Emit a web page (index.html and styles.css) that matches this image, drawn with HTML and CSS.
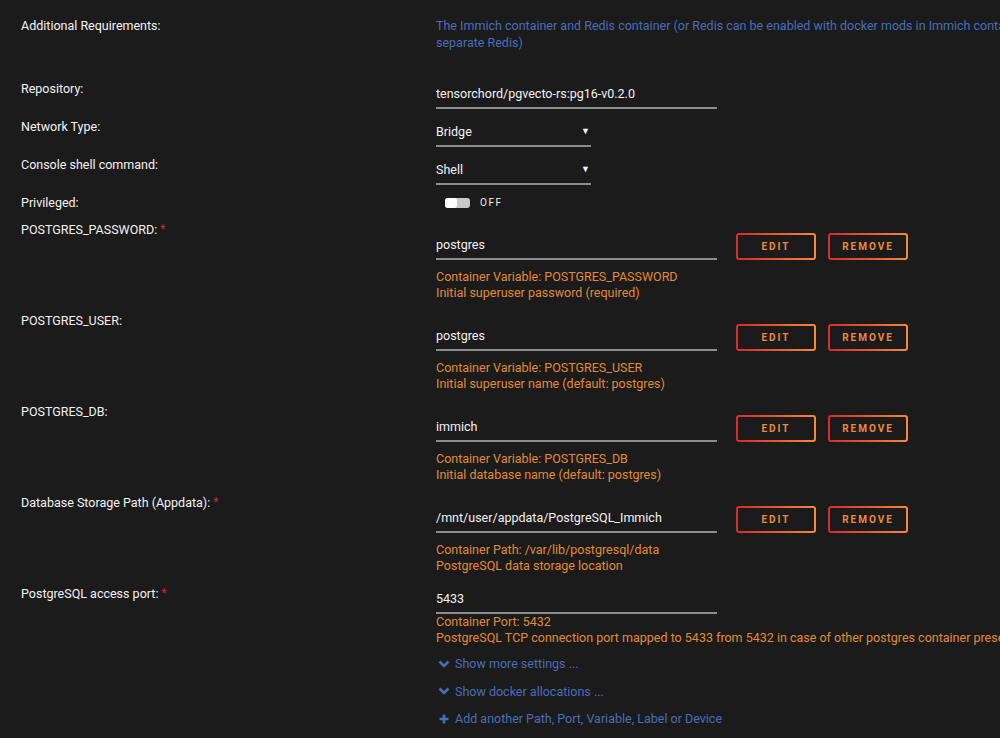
FILE: index.html
```html
<!DOCTYPE html>
<html lang="en">

<head>
    <meta charset="UTF-8">
    <meta name="viewport" content="width=device-width, initial-scale=1.0">
    <title>Immich PostgreSQL - Update Container</title>
    <link rel="stylesheet" href="styles.css">
</head>

<body>

    <form class="settings">

        <div class="row row-info">
            <div class="label">Additional Requirements:</div>
            <div class="info">
                The Immich container and Redis container (or Redis can be enabled with docker mods in Immich container to avoid using a<br>
                separate Redis)
            </div>
        </div>

        <div class="row row-simple">
            <div class="label">Repository:</div>
            <div class="value">
                <div class="field">tensorchord/pgvecto-rs:pg16-v0.2.0</div>
            </div>
        </div>

        <div class="row row-simple">
            <div class="label">Network Type:</div>
            <div class="value">
                <div class="field select">Bridge <span class="caret">&#9660;</span></div>
            </div>
        </div>

        <div class="row row-simple">
            <div class="label">Console shell command:</div>
            <div class="value">
                <div class="field select">Shell <span class="caret">&#9660;</span></div>
            </div>
        </div>

        <div class="row row-switch">
            <div class="label">Privileged:</div>
            <div class="value">
                <span class="switch"><span class="knob"></span></span>
                <span class="switch-text">OFF</span>
            </div>
        </div>

        <!-- container variables / paths -->
        <div class="row row-config">
            <div class="label">POSTGRES_PASSWORD: <span class="required">*</span></div>
            <div class="value">
                <div class="config-line">
                    <div class="field">postgres</div>
                    <button type="button" class="btn">EDIT</button>
                    <button type="button" class="btn">REMOVE</button>
                </div>
                <div class="desc">
                    Container Variable: POSTGRES_PASSWORD<br>
                    Initial superuser password (required)
                </div>
            </div>
        </div>

        <div class="row row-config">
            <div class="label">POSTGRES_USER:</div>
            <div class="value">
                <div class="config-line">
                    <div class="field">postgres</div>
                    <button type="button" class="btn">EDIT</button>
                    <button type="button" class="btn">REMOVE</button>
                </div>
                <div class="desc">
                    Container Variable: POSTGRES_USER<br>
                    Initial superuser name (default: postgres)
                </div>
            </div>
        </div>

        <div class="row row-config">
            <div class="label">POSTGRES_DB:</div>
            <div class="value">
                <div class="config-line">
                    <div class="field">immich</div>
                    <button type="button" class="btn">EDIT</button>
                    <button type="button" class="btn">REMOVE</button>
                </div>
                <div class="desc">
                    Container Variable: POSTGRES_DB<br>
                    Initial database name (default: postgres)
                </div>
            </div>
        </div>

        <div class="row row-config">
            <div class="label">Database Storage Path (Appdata): <span class="required">*</span></div>
            <div class="value">
                <div class="config-line">
                    <div class="field">/mnt/user/appdata/PostgreSQL_Immich</div>
                    <button type="button" class="btn">EDIT</button>
                    <button type="button" class="btn">REMOVE</button>
                </div>
                <div class="desc">
                    Container Path: /var/lib/postgresql/data<br>
                    PostgreSQL data storage location
                </div>
            </div>
        </div>

        <div class="row row-port">
            <div class="label">PostgreSQL access port: <span class="required">*</span></div>
            <div class="value">
                <div class="field">5433</div>
                <div class="desc desc-tight">
                    Container Port: 5432<br>
                    PostgreSQL TCP connection port mapped to 5433 from 5432 in case of other postgres container present
                </div>
            </div>
        </div>

        <div class="links">
            <a class="link" href="#">
                <svg class="icon" viewBox="0 0 12 12" width="12" height="12"><path d="M1.5 3.5 L6 8 L10.5 3.5" fill="none" stroke="currentColor" stroke-width="2.6"/></svg>
                Show more settings ...
            </a>
            <a class="link" href="#">
                <svg class="icon" viewBox="0 0 12 12" width="12" height="12"><path d="M1.5 3.5 L6 8 L10.5 3.5" fill="none" stroke="currentColor" stroke-width="2.6"/></svg>
                Show docker allocations ...
            </a>
            <a class="link" href="#">
                <svg class="icon" viewBox="0 0 12 12" width="12" height="12"><path d="M6 1.5 V10.5 M1.5 6 H10.5" fill="none" stroke="currentColor" stroke-width="2.6"/></svg>
                Add another Path, Port, Variable, Label or Device
            </a>
        </div>

    </form>

</body>

</html>
```

FILE: styles.css
```css
html,
body {
    overflow: hidden;
}

body {
    margin: 0;
    background-color: #1c1b1b;
    color: #f2f2f2;
    font-family: Roboto, "Noto Sans", sans-serif;
    font-size: 12.5px;
}

.settings {
    padding: 17px 0 0 21px;
}

.row {
    display: grid;
    grid-template-columns: 415px 1fr;
}

.label {
    line-height: 17px;
    white-space: nowrap;
}

.required {
    color: #d0272e;
    vertical-align: 1px;
    font-size: 12px;
}

/* Additional requirements */
.row-info {
    margin-bottom: 29px;
}

.info {
    color: #486dba;
    line-height: 17px;
    white-space: nowrap;
}

/* inputs drawn as underlined fields */
.field {
    width: 281px;
    box-sizing: border-box;
    padding: 5px 0 5px 0;
    line-height: 17px;
    border-bottom: 2px solid #8c8c8c;
    white-space: nowrap;
}

.select {
    width: 155px;
    display: flex;
    justify-content: space-between;
}

.caret {
    font-size: 9px;
    padding-right: 1px;
}

.row-simple {
    margin-bottom: 9px;
}

/* switch */
.row-switch {
    margin-bottom: 10px;
}

.row-switch .value {
    display: flex;
    align-items: center;
    height: 17px;
}

.switch {
    display: inline-block;
    width: 25px;
    height: 10px;
    margin: 0 10px 0 9px;
    background-color: #c9c9c9;
    border-radius: 3px;
    position: relative;
}

.knob {
    position: absolute;
    left: 0;
    top: 0;
    width: 12px;
    height: 10px;
    background-color: #fff;
    border-radius: 3px;
}

.switch-text {
    font-size: 10px;
    letter-spacing: 1.5px;
}

/* config rows with edit/remove buttons */
.row-config {
    margin-bottom: 11px;
}

.row-config .value {
    padding-top: 11px;
}

.config-line {
    display: flex;
    align-items: flex-end;
}

.row-config .field {
    padding-top: 4px;
}

.btn {
    width: 80px;
    height: 27px;
    margin-left: 19px;
    padding: 0;
    border: 2px solid transparent;
    border-radius: 3px;
    background: linear-gradient(#1c1b1b, #1c1b1b) padding-box,
        linear-gradient(90deg, #d92a2a, #f5893a) border-box;
    color: #ec8a3f;
    font-family: Roboto, sans-serif;
    font-size: 10px;
    font-weight: bold;
    letter-spacing: 2px;
    cursor: pointer;
}

.btn + .btn {
    margin-left: 12px;
}

.desc {
    color: #e08b3a;
    line-height: 16px;
    margin-top: 9px;
    white-space: nowrap;
}

.desc-tight {
    margin-top: 0;
}

/* port row */
.row-port {
    margin-bottom: 9px;
}

/* bottom links */
.links {
    padding-left: 417px;
    display: flex;
    flex-direction: column;
    gap: 10.5px;
}

.link {
    color: #486dba;
    text-decoration: none;
    line-height: 17px;
    display: flex;
    align-items: center;
    gap: 5px;
}

.icon {
    flex: none;
}
```
